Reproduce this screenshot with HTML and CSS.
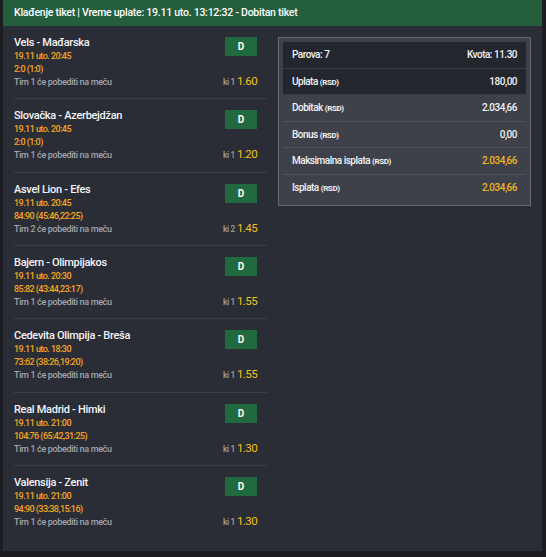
FILE: index.html
```html
<!DOCTYPE html>
<html lang="sr">
<head>
<meta charset="utf-8">
<title>Tiket</title>
<link rel="stylesheet" href="styles.css">
</head>
<body>
<div class="page">
  <div class="header">Klađenje tiket | Vreme uplate: 19.11 uto. 13:12:32 - Dobitan tiket</div>
  <div class="content">
    <div class="list">
      <div class="item">
        <div class="info">
          <div class="title">Vels - Mađarska</div>
          <div class="date">19.11 uto. 20:45</div>
          <div class="score">2:0 (1:0)</div>
          <div class="tip">Tim 1 će pobediti na meču</div>
        </div>
        <div class="side">
          <div class="badge">D</div>
          <div class="odd"><span class="ki">ki 1</span><span class="val">1.60</span></div>
        </div>
      </div>
      <div class="item">
        <div class="info">
          <div class="title">Slovačka - Azerbejdžan</div>
          <div class="date">19.11 uto. 20:45</div>
          <div class="score">2:0 (1:0)</div>
          <div class="tip">Tim 1 će pobediti na meču</div>
        </div>
        <div class="side">
          <div class="badge">D</div>
          <div class="odd"><span class="ki">ki 1</span><span class="val">1.20</span></div>
        </div>
      </div>
      <div class="item">
        <div class="info">
          <div class="title">Asvel Lion - Efes</div>
          <div class="date">19.11 uto. 20:45</div>
          <div class="score">84:90 (45:46,22:25)</div>
          <div class="tip">Tim 2 će pobediti na meču</div>
        </div>
        <div class="side">
          <div class="badge">D</div>
          <div class="odd"><span class="ki">ki 2</span><span class="val">1.45</span></div>
        </div>
      </div>
      <div class="item">
        <div class="info">
          <div class="title">Bajern - Olimpijakos</div>
          <div class="date">19.11 uto. 20:30</div>
          <div class="score">85:82 (43:44,23:17)</div>
          <div class="tip">Tim 1 će pobediti na meču</div>
        </div>
        <div class="side">
          <div class="badge">D</div>
          <div class="odd"><span class="ki">ki 1</span><span class="val">1.55</span></div>
        </div>
      </div>
      <div class="item">
        <div class="info">
          <div class="title">Cedevita Olimpija - Breša</div>
          <div class="date">19.11 uto. 18:30</div>
          <div class="score">73:62 (38:26,19:20)</div>
          <div class="tip">Tim 1 će pobediti na meču</div>
        </div>
        <div class="side">
          <div class="badge">D</div>
          <div class="odd"><span class="ki">ki 1</span><span class="val">1.55</span></div>
        </div>
      </div>
      <div class="item">
        <div class="info">
          <div class="title">Real Madrid - Himki</div>
          <div class="date">19.11 uto. 21:00</div>
          <div class="score">104:76 (65:42,31:25)</div>
          <div class="tip">Tim 1 će pobediti na meču</div>
        </div>
        <div class="side">
          <div class="badge">D</div>
          <div class="odd"><span class="ki">ki 1</span><span class="val">1.30</span></div>
        </div>
      </div>
      <div class="item">
        <div class="info">
          <div class="title">Valensija - Zenit</div>
          <div class="date">19.11 uto. 21:00</div>
          <div class="score">94:90 (33:38,15:16)</div>
          <div class="tip">Tim 1 će pobediti na meču</div>
        </div>
        <div class="side">
          <div class="badge">D</div>
          <div class="odd"><span class="ki">ki 1</span><span class="val">1.30</span></div>
        </div>
      </div>
    </div>
    <div class="summary-wrap">
      <div class="summary">
        <div class="top">
          <div class="row"><span>Parova: 7</span><span>Kvota: 11.30</span></div>
          <div class="row"><span>Uplata <small>(RSD)</small></span><span>180,00</span></div>
        </div>
        <div class="row"><span>Dobitak <small>(RSD)</small></span><span>2.034,66</span></div>
        <div class="row"><span>Bonus <small>(RSD)</small></span><span>0,00</span></div>
        <div class="row"><span>Maksimalna isplata <small>(RSD)</small></span><span class="hl">2.034,66</span></div>
        <div class="row"><span>Isplata <small>(RSD)</small></span><span class="hl">2.034,66</span></div>
      </div>
    </div>
  </div>
</div>
</body>
</html>
```

FILE: styles.css
```css
html, body {
  margin: 0;
  padding: 0;
  background: #1b1d22;
}
body {
  font-family: Roboto, "Noto Sans", "DejaVu Sans", sans-serif;
  color: #eef0f4;
}
.page {
  width: 539px;
  margin-left: 3px;
}
.header {
  height: 26px;
  line-height: 26px;
  background: #245e3d;
  padding-left: 11px;
  font-size: 10.5px;
  font-weight: 500;
  letter-spacing: -0.25px;
  color: #ffffff;
}
.content {
  background: #2a2d35;
  height: 525px;
  display: grid;
  grid-template-columns: 253px 253px;
  column-gap: 11px;
  padding: 0 11px;
  align-items: start;
}
.item {
  display: flex;
  justify-content: space-between;
  padding: 10px 10px 9.33px 0;
  border-bottom: 1px solid #3c3f47;
}
.item:last-child {
  border-bottom: none;
}
.title {
  font-size: 11px;
  line-height: 14px;
  font-weight: 500;
  letter-spacing: -0.3px;
  color: #f3f4f7;
}
.date, .score {
  font-size: 9px;
  line-height: 13px;
  font-weight: 500;
  letter-spacing: -0.55px;
  color: #f5a623;
}
.tip {
  font-size: 9px;
  line-height: 13px;
  font-weight: 500;
  letter-spacing: -0.35px;
  color: #a2a5ac;
}
.side {
  display: flex;
  flex-direction: column;
  justify-content: space-between;
  align-items: flex-end;
}
.badge {
  margin-top: 1px;
  width: 32px;
  height: 19px;
  line-height: 19px;
  text-align: center;
  background: #216a3f;
  color: #ffffff;
  font-size: 10px;
  font-weight: 700;
}
.odd {
  line-height: 13px;
  white-space: nowrap;
}
.ki {
  font-size: 8.5px;
  font-weight: 500;
  color: #9a9ea6;
  letter-spacing: -0.4px;
}
.val {
  margin-left: 2px;
  font-size: 11.5px;
  color: #f2c01d;
  letter-spacing: -0.6px;
}
.summary-wrap {
  padding-top: 11px;
}
.summary {
  border: 1px solid #65686e;
  background: #3e4149;
  padding: 4px;
}
.top {
  background: #23262c;
}
.row {
  height: 26.5px;
  box-sizing: border-box;
  display: flex;
  justify-content: space-between;
  align-items: center;
  padding: 0 9px;
  border-bottom: 1px solid #4e5158;
  font-size: 10px;
  font-weight: 500;
  letter-spacing: -0.5px;
  color: #f1f2f5;
}
.top .row {
  border-bottom-color: #3a3d44;
}
.summary > .row:last-child {
  border-bottom: none;
}
.row small {
  font-size: 8px;
  font-weight: 700;
  letter-spacing: -0.4px;
}
.hl {
  color: #eeb524;
}
```
